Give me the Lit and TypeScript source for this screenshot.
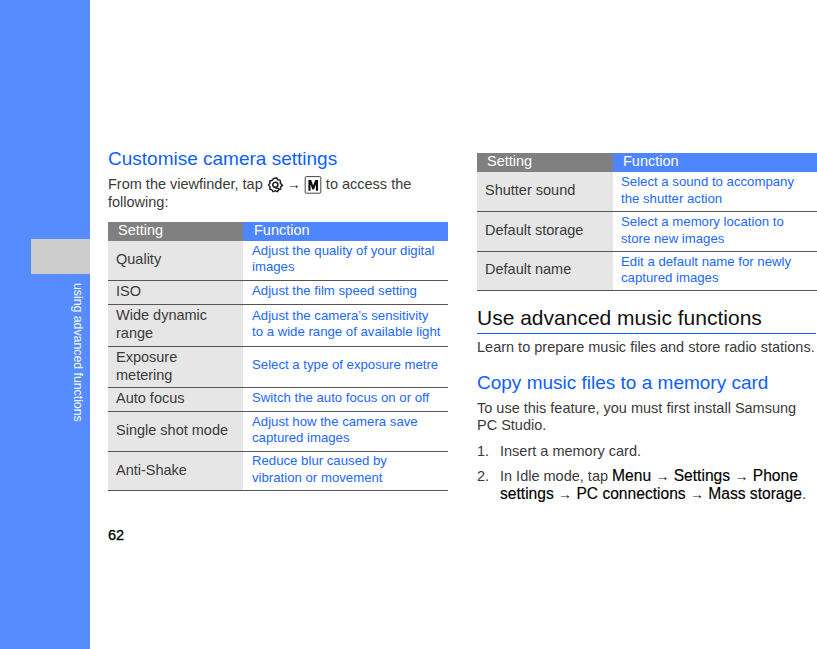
import { LitElement, html, css, svg } from "lit";
import { customElement } from "lit/decorators.js";

type Row = { s: string; f: string; h: number };

const LEFT: Row[] = [
  { s: "Quality", f: "Adjust the quality of your digital\nimages", h: 40 },
  { s: "ISO", f: "Adjust the film speed setting", h: 24 },
  { s: "Wide dynamic\nrange", f: "Adjust the camera’s sensitivity\nto a wide range of available light", h: 42 },
  { s: "Exposure\nmetering", f: "Select a type of exposure metre", h: 41 },
  { s: "Auto focus", f: "Switch the auto focus on or off", h: 24 },
  { s: "Single shot mode", f: "Adjust how the camera save\ncaptured images", h: 40 },
  { s: "Anti-Shake", f: "Reduce blur caused by\nvibration or movement", h: 39 },
];
const RIGHT: Row[] = [
  { s: "Shutter sound", f: "Select a sound to accompany\nthe shutter action", h: 40 },
  { s: "Default storage", f: "Select a memory location to\nstore new images", h: 40 },
  { s: "Default name", f: "Edit a default name for newly\ncaptured images", h: 39 },
];

const gear = svg`<svg class="icon" width="17" height="18" viewBox="0 0 18 18" fill="none" stroke="#222">
  <path d="M7.4 1.8 L10.4 1.6 L11.2 3.4 L13.6 3.8 L14.4 5.6 L14 7 L16.4 9.4 L14.4 11 L14.4 13.2 L12.4 14 L11 16 L8.8 15.2 L6.4 16 L5.2 14.2 L3 13.4 L3.2 11 L1.6 9 L3.2 7 L3 4.8 L5.4 4 Z" stroke-width="1.6"/>
  <circle cx="8.8" cy="8.8" r="2.7" stroke-width="1.7"/>
  <path d="M8.5 12 L12.8 12.8" stroke-width="1.4"/>
</svg>`;

const menuKey = svg`<svg class="icon" width="18" height="18" viewBox="0 0 18 18">
  <rect x="1.2" y="0.6" width="15.6" height="16.6" rx="1" fill="#fff" stroke="#444" stroke-width="1"/>
  <path d="M4.4 14.8 V4 H7.2 L9.2 9.5 L11.2 4 H14 V14.8 H11.9 V8.5 L10 13.6 H8.4 L6.5 8.5 V14.8 Z" fill="#111"/>
</svg>`;

@customElement("app-root")
export class AppRoot extends LitElement {
  static styles = css`
    :host {
      display: block;
      width: 817px;
      height: 649px;
      overflow: hidden;
      background: #fff;
      font-family: "Liberation Sans", Arial, sans-serif;
      color: #3a3a3a;
    }
    .page { display: flex; height: 649px; }
    .side {
      width: 90px;
      flex: none;
      background: #578cff;
      padding-top: 239px;
      box-sizing: border-box;
      display: flex;
      flex-direction: column;
      align-items: flex-end;
    }
    .tab { width: 59px; height: 35px; background: #cccccc; }
    .vert {
      writing-mode: vertical-rl;
      margin: 9px 5px 0 0;
      font-size: 12.5px;
      line-height: 14px;
      color: #f2f6ff;
      letter-spacing: -0.1px;
    }
    .main { flex: 1; min-width: 0; padding-left: 18px; display: flex; flex-direction: column; }
    .cols { display: grid; grid-template-columns: 340px 340px; column-gap: 29px; height: 526px; }
    .lcol { padding-top: 148px; --k: 135px; --vp: 9px; --kb: 2px; --vb: 2px; --fp: 11px; }
    .rcol { padding-top: 153px; --k: 136px; --vp: 8px; --kb: 4px; --vb: 2px; --fp: 10px; }
    h2 { margin: 0; font-weight: 400; }
    .blue-h { font-size: 19px; line-height: 22px; color: #0f5fff; }
    .body { font-size: 14.5px; line-height: 17.5px; margin: 0; }
    .intro { margin: 6px 0 10px; }
    .intro .arr { margin: 0 -1px; }
    .icon { vertical-align: -5px; }
    .arr { font-size: 14px; line-height: 0; color: #222; margin: 0 0.3px; }
    .head { display: grid; grid-template-columns: var(--k) 1fr; height: 19px; color: #fff; font-size: 14.5px; line-height: 17px; }
    .head span:first-child { background: #808080; padding-left: 10px; }
    .head span:last-child { background: #4d86ff; padding-left: var(--fp); }
    .row { display: grid; grid-template-columns: var(--k) 1fr; box-sizing: border-box; border-bottom: 1px solid #555; }
    .k {
      background: #e6e6e6;
      padding: 0 0 var(--kb) 8px;
      font-size: 14.5px;
      line-height: 18px;
      display: flex;
      align-items: center;
      white-space: pre-line;
    }
    .v {
      padding: 0 0 var(--vb) var(--vp);
      font-size: 13.2px;
      line-height: 16.5px;
      color: #2268ff;
      display: flex;
      align-items: center;
      white-space: pre-line;
    }
    .black-h { font-size: 21px; line-height: 25px; color: #111; margin-top: 14px; padding-bottom: 3px; border-bottom: 1px solid #0f5fff; margin-right: 1px; }
    .learn { margin-top: 5px; }
    .copy { margin-top: 15px; }
    .touse { margin-top: 6px; }
    ol { list-style: none; margin: 7px 0 0; padding: 0; font-size: 14.5px; line-height: 18px; }
    li { display: grid; grid-template-columns: 23px 1fr; margin-bottom: 7px; }
    b { font-weight: 400; font-size: 15.6px; color: #000; -webkit-text-stroke: 0.15px #000; }
    .pg { font-size: 14.5px; line-height: 18px; color: #000; -webkit-text-stroke: 0.3px #000; }
  `;

  private table(rows: Row[]) {
    return html`
      <div class="head"><span>Setting</span><span>Function</span></div>
      ${rows.map(
        (r) => html`<div class="row" style="height:${r.h}px">
          <div class="k"><span>${r.s}</span></div>
          <div class="v"><span>${r.f}</span></div>
        </div>`
      )}
    `;
  }

  render() {
    return html`
      <div class="page">
        <div class="side">
          <div class="tab"></div>
          <div class="vert">using advanced functions</div>
        </div>
        <div class="main">
          <div class="cols">
            <div class="lcol">
              <h2 class="blue-h">Customise camera settings</h2>
              <p class="body intro">From the viewfinder, tap ${gear} <span class="arr">→</span> ${menuKey} to access the following:</p>
              ${this.table(LEFT)}
            </div>
            <div class="rcol">
              ${this.table(RIGHT)}
              <h2 class="black-h">Use advanced music functions</h2>
              <p class="body learn">Learn to prepare music files and store radio stations.</p>
              <h2 class="blue-h copy">Copy music files to a memory card</h2>
              <p class="body touse">To use this feature, you must first install Samsung PC Studio.</p>
              <ol>
                <li><span>1.</span><span>Insert a memory card.</span></li>
                <li><span>2.</span><span>In Idle mode, tap <b>Menu</b> <span class="arr">→</span> <b>Settings</b> <span class="arr">→</span> <b>Phone settings</b> <span class="arr">→</span> <b>PC connections</b> <span class="arr">→</span> <b>Mass storage</b>.</span></li>
              </ol>
            </div>
          </div>
          <div class="pg">62</div>
        </div>
      </div>
    `;
  }
}
